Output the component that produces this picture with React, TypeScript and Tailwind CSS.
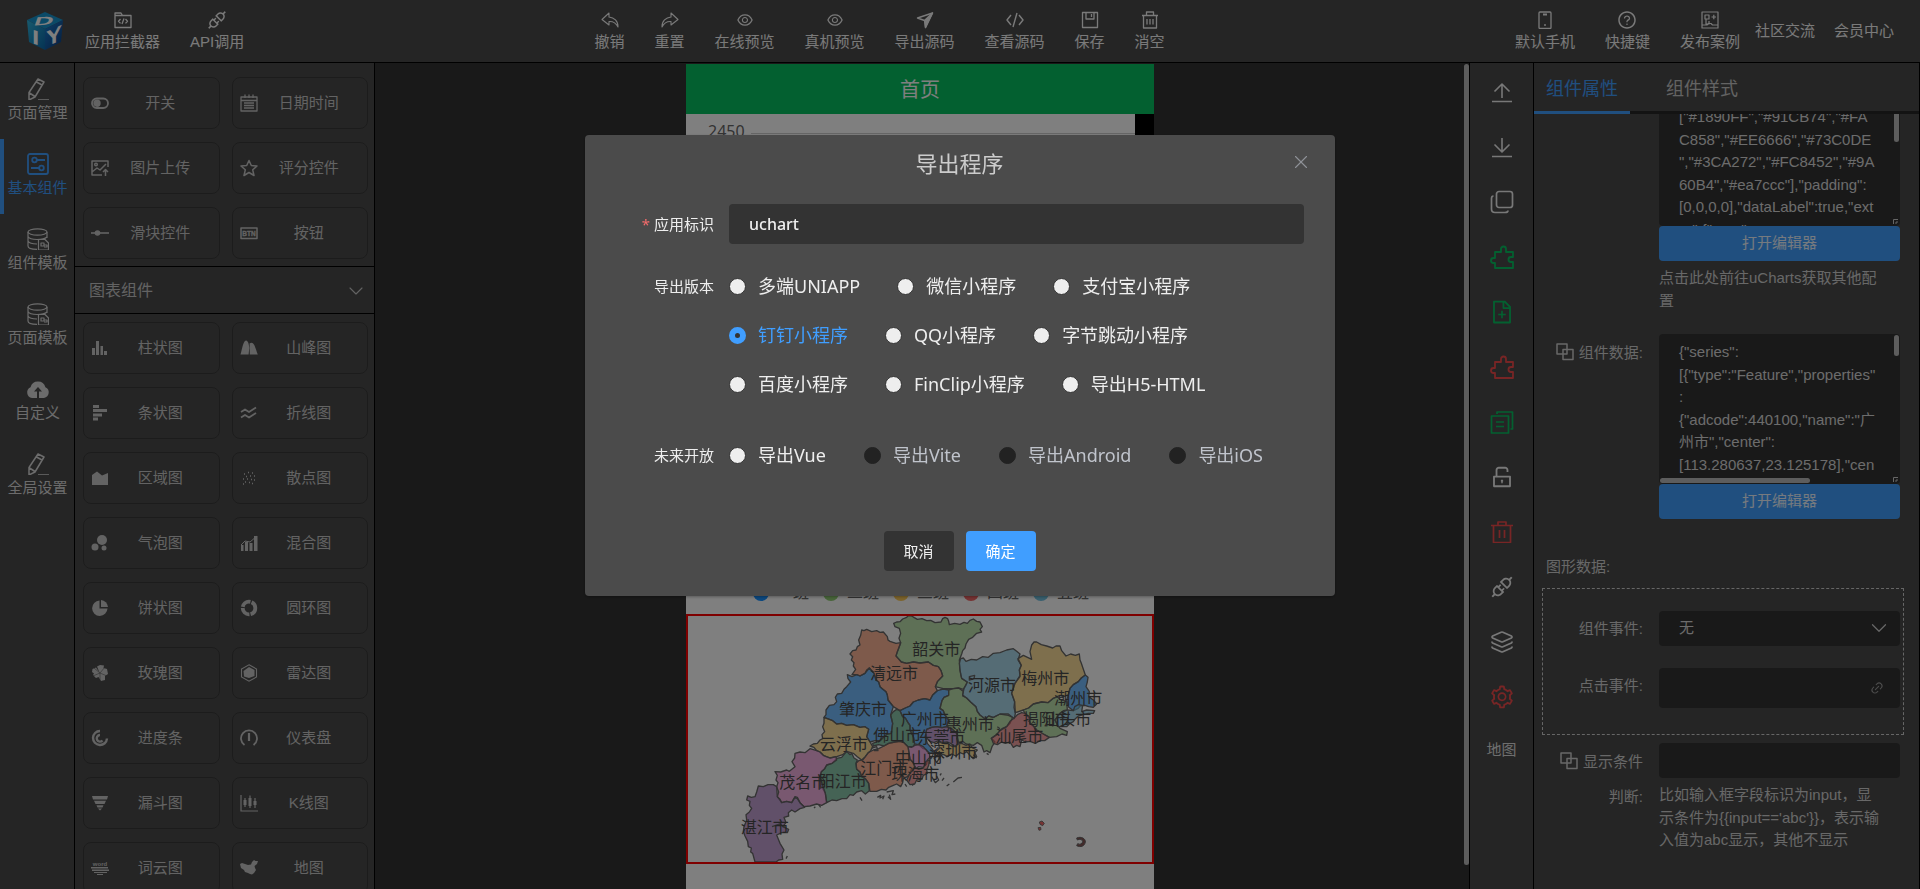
import React, { useState } from 'react';
import type { ReactNode } from 'react';
import {
  AiOutlineApi,
  AiOutlineEye,
  AiOutlineFileAdd,
  AiOutlineQuestionCircle,
  AiOutlineSetting,
  AiOutlineUnlock,
} from 'react-icons/ai';
import { ChevronDown, Layers, Link2, X } from 'lucide-react';

type IconProps = { children: ReactNode; className?: string; box?: number; width?: number };

function Line({ children, className = 'size-[18px]', box = 18, width = 1.3 }: IconProps) {
  return (
    <svg
      className={className}
      viewBox={`0 0 ${box} ${box}`}
      fill="none"
      stroke="currentColor"
      strokeWidth={width}
      strokeLinejoin="round"
      aria-hidden="true"
    >
      {children}
    </svg>
  );
}

function Solid({ children }: { children: ReactNode }) {
  return (
    <svg className="size-[18px] shrink-0" viewBox="0 0 18 18" fill="currentColor" aria-hidden="true">
      {children}
    </svg>
  );
}

/* ---------- header ---------- */

function Logo() {
  return (
    <svg className="h-[38px] w-9 overflow-visible" viewBox="0 0 36 38" aria-label="DIY">
      <defs>
        <linearGradient id="left" x1="0" y1="0" x2="1" y2="1">
          <stop offset="0" stopColor="#2fb4dc" />
          <stop offset="1" stopColor="#0a66a8" />
        </linearGradient>
        <linearGradient id="right" x1="0" y1="0" x2="1" y2="1">
          <stop offset="0" stopColor="#1b7fd0" />
          <stop offset="1" stopColor="#0b3a7c" />
        </linearGradient>
      </defs>
      <path d="M18 0 36 8 18 17 0 8Z" fill="#1795cf" />
      <path d="M0 8 18 17V38L2 30Z" fill="url(#left)" />
      <path d="M36 8 18 17V38L34 30Z" fill="url(#right)" />
      <g fill="#fff" fontFamily="Liberation Sans, sans-serif" fontWeight="700">
        <text transform="matrix(1.9 -.1 -.3 .85 6 13.5)" fontSize="14">D</text>
        <text transform="matrix(1.3 .5 0 1 5 31)" fontSize="20">I</text>
        <text transform="matrix(1.1 -.5 0 1 19 35)" fontSize="22">Y</text>
      </g>
    </svg>
  );
}

const undo = (
  <Line width={1.1}>
    <path d="M8 2 1 8.500 8 14V10.500C12 10.200 15 12 17 16 17.200 10 13 6.500 8 6Z" />
  </Line>
);
const redo = (
  <Line width={1.1}>
    <path d="M10 2 17 8.500 10 14V10.500C6 10.200 3 12 1 16 .8 10 5 6.500 10 6Z" />
  </Line>
);
const folderCode = (
  <Line>
    <path d="M1 16.500V2H7L8.500 4.500H17V16.500ZM1 4.500H8.500M6.500 8 4.500 10.200 6.500 12.400M11.500 8 13.500 10.200 11.500 12.400M10 7.500 8 13" />
  </Line>
);
const plane = (
  <Line width={1.4}>
    <path d="M1.500 7 16.500 2 9.500 16.500 8.500 9.500Z" />
    <path d="M16.500 2 9.500 16.500 9 9Z" fill="currentColor" />
  </Line>
);
const code = (
  <Line width={1.4}>
    <path d="M5 4 1 9 5 14M13 4 17 9 13 14M11 2 7 16" />
  </Line>
);
const save = (
  <Line width={1.3}>
    <path d="M1.500 1.500H16.500V16.500H1.500ZM5 1.500V8H13V1.500M10.500 3V6" />
  </Line>
);
const clear = (
  <Line>
    <path d="M1 4.500H17M5.500 4.500V1H12.500V4.500M2.500 4.500V17H15.500V4.500M6 8V13.500M9 8V13.500M12 8V13.500" />
  </Line>
);
const phone = (
  <Line>
    <rect x="3" y="1" width="12" height="16.500" rx="1" />
    <path d="M7 3.500H11M8.300 14H9.700" strokeWidth="1.800" />
  </Line>
);
const cases = (
  <Line width={1.2}>
    <path d="M1 1H17V17H1ZM4 4H8V8H4ZM10.500 6H15M12.800 3.800V8.200M5 8V13H8V10M1 14H6L7.500 12.500H10L11.500 14H17" />
  </Line>
);

function TopButton({ icon, label }: { icon: ReactNode; label: string }) {
  return (
    <button type="button" className="flex flex-col items-center whitespace-nowrap pt-0.5 text-[15px] leading-6">
      <span className="flex h-5 items-center">{icon}</span>
      {label}
    </button>
  );
}

const eye = <AiOutlineEye className="size-[18px]" />;

function Header() {
  return (
    <header className="flex h-[63px] shrink-0 items-center justify-between border-b border-black bg-[#4b4b4b] pl-[27px] pr-[26px] text-[#f4f4f4]">
      <div className="flex items-center">
        <Logo />
        <div className="ml-[22px] flex gap-[30px]">
          <TopButton icon={folderCode} label="应用拦截器" />
          <TopButton icon={<AiOutlineApi className="size-[22px]" />} label="API调用" />
        </div>
      </div>
      <div className="flex gap-[30px]">
        <TopButton icon={undo} label="撤销" />
        <TopButton icon={redo} label="重置" />
        <TopButton icon={eye} label="在线预览" />
        <TopButton icon={eye} label="真机预览" />
        <TopButton icon={plane} label="导出源码" />
        <TopButton icon={code} label="查看源码" />
        <TopButton icon={save} label="保存" />
        <TopButton icon={clear} label="消空" />
      </div>
      <nav className="flex items-center text-[15px]">
        <div className="flex gap-[30px]">
          <TopButton icon={phone} label="默认手机" />
          <TopButton icon={<AiOutlineQuestionCircle className="size-5" />} label="快捷键" />
          <TopButton icon={cases} label="发布案例" />
        </div>
        <a href="#community" className="ml-[15px]">社区交流</a>
        <a href="#member" className="ml-[19px]">会员中心</a>
      </nav>
    </header>
  );
}

/* ---------- left side ---------- */

const nav22 = 'size-[22px]';
const pencil = (
  <Line className={nav22} box={22} width={1.5}>
    <path d="M11 1 17 4 8 19 2 22V14.500ZM9.500 4 15 7M2.500 15 8 18.500M11 22H22" />
  </Line>
);
const parts = (
  <Line className={nav22} box={22} width={1.8}>
    <rect x="1" y="1" width="20" height="20" rx="2" />
    <circle cx="7.500" cy="7" r="2.300" />
    <circle cx="14.500" cy="15" r="2.300" />
    <path d="M10 7H18M4 15H12" />
  </Line>
);
const database = (
  <Line className={nav22} box={22} width={1.2}>
    <ellipse cx="10.500" cy="4" rx="9.500" ry="3.200" />
    <path d="M1 4V18C1 20 5 21.300 10 21.300M20 4V10M1 8.500C2 10.500 6 11.500 10 11.500 14 11.500 18 10.800 20 9M1 13C2 15 5 16 10 16M11.500 11.500H18L21.500 15V22H11.500ZM14 15H17V18H14ZM17 17H20V19H17" />
  </Line>
);
const cloud = (
  <svg className="size-6" viewBox="0 0 24 24" fill="currentColor" aria-hidden="true">
    <path d="M6 21A5.700 5.700 0 0 1 4.500 10.200 7.700 7.700 0 0 1 19.400 10.200 5.700 5.700 0 0 1 18 21H13V14.500H16L12 10 8 14.500H11V21Z" />
  </svg>
);

const sideItems: [string, ReactNode][] = [
  ['页面管理', pencil],
  ['基本组件', parts],
  ['组件模板', database],
  ['页面模板', database],
  ['自定义', cloud],
  ['全局设置', pencil],
];

function SideNav() {
  return (
    <nav className="flex w-[75px] shrink-0 flex-col border-r border-black bg-[#4b4b4b] pt-px">
      {sideItems.map(([label, icon]) => (
        <a
          key={label}
          href="#side"
          className={
            label === '基本组件'
              ? 'flex h-[75px] flex-col items-center border-l-4 border-[#409eff] pr-[3px] pt-[13px] text-[15px] leading-6 text-[#409eff]'
              : 'flex h-[75px] flex-col items-center pl-px pt-[13px] text-[15px] leading-6 text-[#d8d8d8]'
          }
        >
          <span className="flex h-6 items-center">{icon}</span>
          {label}
        </a>
      ))}
    </nav>
  );
}

const basics: [string, ReactNode][] = [
  ['开关', <Line width={1.8}><rect x="1" y="4.500" width="16" height="9.500" rx="4.700" /><circle cx="6" cy="9.200" r="2.800" fill="currentColor" /></Line>],
  ['日期时间', <Line><path d="M1 3H17V17H1ZM1 6.500H17M5 .5V4M9 .5V4M13 .5V4M4 9H14M4 11.500H14M4 14H14" /></Line>],
  ['图片上传', <Line width={1.5}><path d="M17 8V2H1V16H11M1 13 6 9 9 11 15 5M14.500 17V11M12 13 14.500 10.500 17 13" /><circle cx="5" cy="5.500" r="1.300" /></Line>],
  ['评分控件', <Line width={1.5}><path d="M9 1.500 11.300 6.500 17 7 12.700 10.800 14 16.500 9 13.500 4 16.500 5.300 10.800 1 7 6.700 6.500Z" /></Line>],
  ['滑块控件', <Line width={1.600}><path d="M0 9H18" /><circle cx="6.500" cy="9" r="2" fill="currentColor" /></Line>],
  [
    '按钮',
    <Line width={1.500}>
      <rect x="1" y="4" width="16" height="10.500" />
      <text x="9" y="11.800" textAnchor="middle" fontSize="6.500" fontWeight="700" fontFamily="Liberation Sans, sans-serif" fill="currentColor" stroke="currentColor" strokeWidth=".3">BTN</text>
    </Line>,
  ],
];

const charts: [string, ReactNode][] = [
  ['柱状图', <Solid><path d="M1 9H4V16H1ZM5 2H8V16H5ZM9.500 7H12V16H9.500ZM13 12H16V16H13Z" /></Solid>],
  ['山峰图', <Solid><path d="M.5 15.500C2 11 3 2 6 1.500 8.500 2 9 6 9.300 9L8.600 15.500ZM9.800 15.500 9.600 4.500C14.500 1 16 12 17.800 15.500Z" /></Solid>],
  ['条状图', <Solid><path d="M2 1H8V4H2ZM2 5H16V8H2ZM2 9.500H11V12.500H2ZM2 13.500H7V16.500H2Z" /></Solid>],
  ['折线图', <Line width={1.800}><path d="M1 8 5 5.500 9 8 16 3.500M1 13.500 5 11 9 13.500 16 9" /></Line>],
  ['区域图', <Solid><path d="M1 16V6L6 2.500 11 6.500 17 4V16Z" /></Solid>],
  ['散点图', <Line width={1.500}><path d="M4 5H5M8 3.500H9M12 4H13M14 7H15M6 7.500H7M10 7H11M3 10H4M7 10H8M11 10.500H12M14 11H15M5 13H6M9 13.500H10M12 14.500H13M3 15H4" /></Line>],
  ['气泡图', <Solid><circle cx="11" cy="6" r="5" /><circle cx="4" cy="13" r="3.500" /><circle cx="13" cy="14" r="2.500" /></Solid>],
  ['混合图', <Solid><path d="M1 11H3.500V17H1ZM5 8H8V17H5ZM9.500 9H12.500V17H9.500ZM14 2H17.500V17H14Z" /><path d="M1 11 5 7 10 8 17 2" fill="none" stroke="currentColor" /></Solid>],
  ['饼状图', <Solid><path d="M8.500 1.500A7.700 7.700 0 1 0 16.500 9.500H8.500Z" /><path d="M10 1A7.500 7.500 0 0 1 17 8H10Z" /></Solid>],
  ['圆环图', <Line width={3.800}><circle cx="9" cy="9" r="6.300" strokeDasharray="8 1.200 10 1.200 10 1.200 7 1" /></Line>],
  ['玫瑰图', <Solid><path d="M8.500 8.500 6 2.500 9 1 13 1.500 12.500 4 16 5 17 10 14 12 14 16 10 17 7.500 13 5 14 2 11 3 9.500 1 8 1.500 5 5 3.500Z" /><path d="M9 9 3 4M9 9 2 12M9 9 14 3M9 9 16 12M9 9 9 17" stroke="#4b4b4b" strokeWidth=".5" /></Solid>],
  ['雷达图', <Solid><path d="M9 .8 16.500 5V13L9 17.200 1.500 13V5Z" fill="none" stroke="currentColor" strokeWidth="1.100" /><path d="M9 3 14.500 6V12L9 14 4 12.500 3.500 7Z" /></Solid>],
  ['进度条', <Line width={2.400}><path d="M9 2A7 7 0 1 0 16 9.500M9 6A3.300 3.300 0 1 0 11.500 11.500" /></Line>],
  ['仪表盘', <Line width={1.800}><path d="M4.500 16A8 8 0 1 1 13.500 16" /><path d="M9 4V12" strokeWidth="2.200" /></Line>],
  ['漏斗图', <Solid><path d="M1 2H17L16 5.500H2ZM3 6.800H15L13.500 10H4.500ZM5.500 11.300H12.500L11.500 13.500H6.500ZM7 14.500H11L9 16.500Z" /></Solid>],
  ['K线图', <Line width={1.200}><path d="M1 1V17H18M5 4V13M10 1.500V14M15 4V14" /><path d="M5 6V11M10 4V12M15 7V11" strokeWidth="3" /></Line>],
  [
    '词云图',
    <Solid>
      <text x="9" y="7" textAnchor="middle" fontSize="6" fontWeight="700" fontFamily="Liberation Sans, sans-serif">word</text>
      <path d="M0 8H17V9.500H0ZM1 10.500H18V12H1ZM3 13H16V14H3ZM6 15H12V16H6Z" />
    </Solid>,
  ],
  ['地图', <Solid><path d="M0 5 2 4 5 5 8 6 11 5.500 12 3 14 1 15.500 2 18 2 17 5 14.500 7 15 9 16 11 14 14 12 15.500 10 15 8 14 5 13 4 11 1 9Z" /></Solid>],
];

function CardGrid({ items }: { items: [string, ReactNode][] }) {
  return (
    <div className="grid grid-cols-2 gap-x-3 gap-y-[13px] pl-2 pr-1.5">
      {items.map(([label, icon]) => (
        <button
          type="button"
          key={label}
          className="flex h-[52px] items-center rounded-lg border border-[#393939] px-[7px] text-[15px] text-[#c6c6c6]"
        >
          {icon}
          <span className="flex-1 text-center">{label}</span>
        </button>
      ))}
    </div>
  );
}

function ComponentPanel() {
  return (
    <aside className="flex w-[300px] shrink-0 flex-col overflow-hidden border-r border-black bg-[#4b4b4b] pt-3.5">
      <div className="shrink-0 pb-[7px]">
        <CardGrid items={basics} />
      </div>
      <button
        type="button"
        className="flex h-12 shrink-0 items-center justify-between border-y border-black pl-3.5 pr-1.5 pt-px text-base text-[#c6c6c6]"
      >
        图表组件
        <ChevronDown className="size-6" strokeWidth={1.1} />
      </button>
      <div className="shrink-0 pt-2">
        <CardGrid items={charts} />
      </div>
    </aside>
  );
}

/* ---------- canvas ---------- */

const blue = '#1890FF';
const green = '#91CB74';
const yellow = '#FAC858';
const red = '#EE6666';
const cyan = '#73C0DE';
const teal = '#3CA272';
const orange = '#FC8452';
const purple = '#9A60B4';
const pink = '#EA7CCC';

const regions: [string, number, number, string, string][] = [
  ['韶关市', 697, 207, green, '641,130 650,126 660,125 668,117 680,112 686,106 695,108 703,113 712,118 726,116 740,122 752,121 765,128 783,126 788,116 795,112 803,116 806,124 808,134 824,130 840,133 852,127 862,130 870,121 880,117 890,124 900,126 907,140 900,148 905,156 890,160 878,172 866,178 858,192 855,204 848,212 845,222 838,240 840,270 845,295 862,306 858,316 850,328 836,324 820,326 790,326 766,320 772,305 788,288 783,272 775,260 760,256 745,246 720,249 700,246 680,250 664,246 655,236 648,228 652,215 656,205 662,188 657,175 662,160 658,145 645,140'],
  ['清远市', 570, 279, orange, '545,150 552,152 560,148 575,155 590,152 600,157 610,156 622,170 624,180 630,184 648,190 662,188 656,205 652,215 648,228 655,236 664,246 680,250 700,246 720,249 745,246 760,256 775,260 783,272 788,288 772,305 766,320 772,332 758,345 750,360 734,356 715,360 700,366 690,378 676,384 660,392 640,380 624,360 622,345 618,335 606,326 600,320 596,306 588,300 582,280 568,264 560,270 555,280 540,288 530,284 516,284 527,268 520,258 522,248 514,240 518,230 510,222 518,212 528,210 532,200 540,195 536,180 542,166'],
  ['肇庆市', 477, 388, blue, '502,284 516,290 530,284 540,288 555,280 568,264 582,280 588,300 596,306 600,320 618,335 622,345 624,360 640,380 632,405 638,430 634,460 622,462 612,470 600,482 585,482 570,486 560,470 566,448 555,440 540,442 520,434 500,436 485,430 470,432 458,422 448,418 432,412 438,404 438,390 448,376 462,374 470,365 466,352 472,342 485,340 492,328 500,320 512,306 504,296'],
  ['云浮市', 420, 492, yellow, '432,412 448,418 458,422 470,432 485,430 500,436 520,434 540,442 555,440 566,448 560,470 570,486 578,500 572,512 565,518 556,530 545,540 532,530 520,520 500,514 488,524 470,530 450,534 438,530 430,526 420,516 410,512 402,502 390,498 400,492 412,490 420,480 428,476 426,464 434,455 428,440 432,430'],
  ['广州市', 662, 417, blue, '660,392 676,384 690,378 700,366 715,360 734,356 750,360 758,345 772,332 790,327 806,330 806,346 792,352 786,362 780,385 790,392 795,405 806,420 800,440 786,443 770,440 755,442 740,448 736,470 742,490 755,505 764,518 748,520 738,508 730,506 716,494 704,492 700,470 690,450 690,436 684,428 676,414 668,410'],
  ['佛山市', 580, 464, teal, '640,395 650,388 660,392 668,410 676,414 684,428 690,436 690,450 700,470 704,492 700,500 684,500 672,488 660,484 645,486 626,490 612,498 596,494 580,498 578,490 600,482 612,470 622,462 634,460 638,430 632,405'],
  ['惠州市', 798, 432, green, '806,330 820,326 836,324 850,334 848,348 860,354 872,366 888,380 892,394 900,405 915,416 926,408 940,412 960,402 985,406 998,412 990,430 980,440 966,446 960,452 950,464 934,475 945,486 936,500 930,518 920,512 912,516 905,496 892,488 880,496 858,492 848,484 836,488 830,460 815,446 800,440 806,420 795,405 790,392 780,385 786,362 792,352 806,346'],
  ['河源市', 864, 316, cyan, '842,236 850,234 858,244 874,238 890,240 908,230 925,232 940,220 960,218 980,210 1000,206 1010,214 1020,222 1014,240 1024,256 1018,270 1022,284 1005,310 1000,325 995,340 1004,365 1002,382 1006,400 1003,416 985,402 960,402 940,412 926,408 915,416 900,405 892,394 888,380 872,366 860,354 848,345 852,325 862,306 845,295 842,282 840,270 838,250'],
  ['梅州市', 1024, 295, yellow, '1055,195 1062,186 1070,186 1084,194 1100,198 1118,204 1128,198 1140,198 1145,212 1158,228 1172,222 1186,226 1198,222 1200,240 1204,250 1208,262 1216,285 1204,294 1195,305 1180,314 1170,325 1165,345 1150,350 1140,346 1120,355 1104,368 1085,366 1060,372 1046,384 1030,390 1006,398 1004,365 995,340 1000,325 1005,310 1020,290 1018,270 1024,256 1014,236 1030,226 1055,238 1050,215'],
  ['揭阳市', 1028, 416, green, '1030,390 1046,384 1060,372 1085,366 1104,368 1120,355 1132,350 1140,358 1160,365 1162,390 1150,392 1140,400 1125,420 1132,434 1140,445 1162,455 1160,466 1146,462 1130,470 1108,472 1090,462 1070,450 1060,438 1050,430 1048,412 1036,404'],
  ['潮州市', 1123, 354, blue, '1216,285 1224,292 1222,306 1218,320 1228,335 1226,350 1240,360 1250,372 1240,382 1226,380 1215,376 1200,378 1195,385 1180,392 1165,380 1160,360 1165,345 1170,325 1180,314 1195,305 1204,294'],
  ['汕头市', 1090, 418, cyan, '1180,392 1184,380 1195,374 1208,376 1205,395 1220,390 1244,392 1240,400 1225,400 1210,404 1195,408 1186,416 1180,425 1170,430 1160,440 1135,440 1125,420 1140,400 1162,390'],
  ['汕尾市', 946, 468, red, '1025,398 1036,400 1048,412 1050,430 1060,438 1070,450 1090,462 1108,472 1094,482 1080,482 1066,490 1050,484 1036,486 1025,480 1020,500 1010,496 1000,502 990,486 976,490 965,486 952,494 940,490 934,475 950,464 960,452 980,440 990,424 1000,416 1012,404'],
  ['东莞市', 712, 470, purple, '740,448 755,442 770,440 786,443 800,440 815,446 832,462 830,476 834,490 826,500 812,490 800,486 786,488 775,482 762,488 750,484 736,470'],
  ['深圳市', 748, 515, yellow, '775,484 788,490 800,488 814,498 826,500 834,492 845,490 858,496 870,492 878,504 892,510 884,518 890,530 880,536 868,524 860,515 850,522 840,518 828,528 815,522 802,530 790,523 776,528 765,525 770,512 778,505'],
  ['中山市', 645, 535, pink, '684,500 694,502 704,496 718,494 730,500 740,512 748,520 750,532 742,540 740,552 730,562 715,560 708,566 700,548 690,538'],
  ['珠海市', 634, 582, red, '690,580 694,568 704,562 716,568 730,564 738,544 748,540 746,556 740,570 742,580 730,586 726,598 710,600 704,612 690,614 680,600'],
  ['江门市', 541, 565, orange, '645,486 660,484 672,488 684,500 688,525 690,538 700,548 704,562 690,580 682,590 670,596 668,608 662,620 650,612 640,616 626,622 618,630 604,628 590,634 570,634 566,610 556,596 545,590 540,576 530,568 528,550 536,542 548,540 556,530 565,518 580,510 596,506 612,498 626,490'],
  ['阳江市', 416, 602, teal, '500,514 510,524 515,520 522,534 532,540 528,550 530,568 540,576 545,590 556,596 566,610 568,632 556,642 545,632 530,636 520,646 510,644 500,656 486,656 470,662 456,660 440,668 436,640 428,625 426,610 420,590 424,575 434,566 440,555 456,550 470,535 485,532'],
  ['茂名市', 298, 605, pink, '345,520 360,516 375,518 390,506 410,512 420,516 430,526 450,534 468,530 470,540 456,550 440,555 434,566 424,575 420,590 426,610 436,640 440,668 425,676 410,672 390,678 372,680 360,668 352,652 345,650 335,668 320,664 305,668 292,650 296,636 290,620 294,608 288,600 292,586 285,575 302,576 320,570 328,574 345,560 336,545 344,534'],
  ['湛江市', 182, 740, purple, '235,618 250,620 264,614 280,614 290,620 292,650 300,658 305,668 320,664 335,668 345,652 352,656 360,668 374,682 360,686 345,696 335,690 325,698 326,708 312,712 318,728 308,740 326,748 322,758 305,758 290,765 296,780 300,790 312,810 306,822 308,838 296,840 288,846 225,846 218,820 212,816 214,804 205,800 203,784 195,768 190,754 192,740 200,720 198,704 208,696 215,685 208,676 210,664 200,660 203,648 214,652 225,650 230,636'],
];

const islands =
  'M592 652 602 646 600 654 612 648 608 658M620 636 640 632 636 644 646 642 M624 650 632 658 628 644M540 652 546 662M402 684 406 680M416 674 422 682M755 590 766 608 776 600 770 588M780 586 784 580M786 602 792 594M800 618 808 612M820 606 834 594 846 592M318 836 322 828M675 612 680 620M696 616 702 612M576 504 590 500 594 512 582 512M868 290 884 286 882 296 868 300ZM276 740 300 732 318 744M762 534 770 548 782 528M952 440 960 446M880 524 890 534M920 520 926 524';

function MapChart() {
  return (
    <svg className="h-full w-full" viewBox="24 108 1392 738" aria-label="地图">
      <g stroke="#666" strokeWidth="4" strokeLinejoin="round">
        {regions.map(([name, , , color, points]) => (
          <polygon key={name} points={points} fill={color} fillOpacity="0.6" />
        ))}
        <path d={islands} fill="none" />
        <path d="M1078 726 1086 723 1093 730 1088 737 1080 733ZM1074 743 1082 742 1083 749 1077 751Z" fill={red} strokeWidth="2.500" />
        <path d="M1190 774C1204 768 1217 776 1216 786 1214 799 1202 803 1190 797L1193 791C1201 795 1207 791 1208 785 1208 778 1199 776 1192 780Z" fill="#855" strokeWidth="3" />
      </g>
      <g fill="#4a4a4a" fontSize="48" fontFamily="Noto Sans CJK SC, sans-serif">
        {regions.map(([name, x, y]) => (
          <text key={name} x={x} y={y + 18}>{name}</text>
        ))}
      </g>
    </svg>
  );
}

const legend: [string, string][] = [
  ['一班', 'bg-[#1890FF]'],
  ['二班', 'bg-[#91CB74]'],
  ['三班', 'bg-[#FAC858]'],
  ['四班', 'bg-[#EE6666]'],
  ['五班', 'bg-[#73C0DE]'],
];

function Canvas() {
  return (
    <main className="flex min-w-0 flex-1 bg-[#333] pt-px">
      <div className="flex min-w-0 flex-1 justify-center pl-px">
        <div className="flex w-[468px] flex-col bg-white">
          <h1 className="flex h-[50px] shrink-0 items-center justify-center bg-[#07c160] pt-px text-xl text-white">首页</h1>
          <div className="h-[450px] shrink-0 bg-black pr-[19px]">
            <div className="flex h-full items-start bg-white pl-[22px] pt-[5px] font-[family-name:'Noto_Sans',sans-serif] text-base leading-6 text-[#666]">
              2450
              <span className="ml-1.5 mt-3.5 h-px flex-1 bg-[#ccc]" />
            </div>
          </div>
          <ul className="flex h-[50px] shrink-0 items-center justify-center gap-[14px] pl-0.5 pt-2 text-base text-[#666]">
            {legend.map(([name, dot]) => (
              <li key={name} className="flex items-center gap-2">
                <span className={`size-4 rounded-full ${dot}`} />
                {name}
              </li>
            ))}
          </ul>
          <div className="h-[250px] shrink-0 border-2 border-[#f00]">
            <MapChart />
          </div>
        </div>
      </div>
      <div className="h-[801px] w-[5px] rounded-full bg-[#bbb]" />
    </main>
  );
}

/* ---------- tool column ---------- */

const tool22 = 'size-[22px]';
const puzzle = (
  <Line className="size-6" box={24} width={1.8}>
    <path d="M5 7H11V4A2.500 2.500 0 1 1 16 4V7H23V12H21A2.500 2.500 0 1 0 21 17H23V23H5V18H3.500A2.500 2.500 0 1 1 3.500 13H5Z" />
  </Line>
);

const tools: [string, string, ReactNode][] = [
  ['上移', 'text-[#f0f0f0]', <Line className={tool22} box={22} width={1.6}><path d="M1 20.500H21M11 17V3M3.500 10.500 11 3 18.500 10.500" /></Line>],
  ['下移', 'text-[#f0f0f0]', <Line className={tool22} box={22} width={1.6}><path d="M1 20.500H21M11 2V16M3.500 8.500 11 16 18.500 8.500" /></Line>],
  ['复制', 'text-[#f0f0f0]', <Line className="size-6" box={24} width={1.7}><rect x="6.500" y="1.500" width="16" height="16" rx="2.500" /><path d="M3.500 6C2 6 1.500 7 1.500 8.500V19C1.500 21.500 2.500 22.500 5 22.500H15C17 22.500 18 22 18 20.500" /></Line>],
  ['组合', 'text-[#07c160]', puzzle],
  ['添加', 'text-[#07c160]', <AiOutlineFileAdd className="size-[26px]" />],
  ['拆分', 'text-[#f04a4a]', puzzle],
  ['粘贴', 'text-[#07c160]', <Line className="size-6" box={24} width={1.7}><path d="M1.500 6H18.500V23H1.500ZM7 4V2H22.500V19H20.500M6 12H14M6 16.500H14" /></Line>],
  ['解锁', 'text-[#f0f0f0]', <AiOutlineUnlock className="size-[26px]" />],
  ['删除', 'text-[#f04a4a]', <Line className={tool22} box={22} width={1.7}><path d="M0 4.500H22M7 4.500V1H15V4.500M2.500 4.500V21.500H19.500V4.500M8.500 9V17M13.500 9V17" /></Line>],
  ['接口', 'text-[#f0f0f0]', <AiOutlineApi className="size-[26px]" />],
  ['图层', 'text-[#f0f0f0]', <Layers className="size-6" strokeWidth={1.7} />],
  ['设置', 'text-[#f04a4a]', <AiOutlineSetting className="size-[26px]" />],
];

function ToolColumn() {
  return (
    <div className="flex w-[65px] shrink-0 flex-col items-center border-x border-black bg-[#4b4b4b] pt-px">
      {tools.map(([label, color, icon]) => (
        <button key={label} type="button" aria-label={label} className={`flex h-[55px] w-full shrink-0 items-center justify-center ${color}`}>
          {icon}
        </button>
      ))}
      <span className="pt-[15px] text-[15px] text-[#ddd]">地图</span>
    </div>
  );
}

/* ---------- property panel ---------- */

const configText =
  '["#1890FF","#91CB74","#FA\nC858","#EE6666","#73C0DE\n","#3CA272","#FC8452","#9A\n60B4","#ea7ccc"],"padding":\n[0,0,0,0],"dataLabel":true,"ext\nra":{"map":';
const dataText =
  '{"series":\n[{"type":"Feature","properties"\n:\n{"adcode":440100,"name":"广\n州市","center":\n[113.280637,23.125178],"cen';

const fieldBase = 'block w-full rounded bg-[#333] text-[#d8d8d8] outline-none';

function Overlap() {
  return (
    <Line className="mr-[5px] inline-block size-[18px] align-[-3px]" width={1.5}>
      <path d="M1 1H11V11H1ZM7 6.500H17V16.500H7Z" />
    </Line>
  );
}

function Resizer() {
  return (
    <svg className="absolute bottom-0.5 right-0.5 size-[5px]" viewBox="0 0 5 5" fill="none" stroke="#ccc" aria-hidden="true">
      <path d="M.5 5V.5H5M3 5V3H5" />
    </svg>
  );
}

const labelClass = 'w-[101px] shrink-0 pt-px text-right leading-[35px]';
const rowClass = 'flex gap-4 pl-2 pr-[19px]';
const openClass = 'flex h-[35px] w-full items-center justify-center rounded bg-[#409eff] text-[15px] text-white/90';

function Properties() {
  return (
    <aside className="flex w-[386px] shrink-0 flex-col border-r border-black bg-[#4b4b4b] pt-px text-[15px] text-[#d0d0d0]">
      <div role="tablist" className="flex h-[50px] shrink-0 border-b-[3px] border-[#262626] text-lg">
        <button type="button" role="tab" aria-selected="true" className="-mb-[3px] border-b-[3px] border-[#409eff] px-3 pt-0.5 text-[#409eff]">
          组件属性
        </button>
        <button type="button" role="tab" aria-selected="false" className="ml-6 -mb-[3px] border-b-[3px] border-transparent px-3 pt-0.5 text-[#c6c6c6]">
          组件样式
        </button>
      </div>
      <div className="min-h-0 flex-1 overflow-hidden">
        <div className={`${rowClass} -mt-[38px]`}>
          <span className={labelClass} />
          <div className="min-w-0 flex-1">
            <div className="relative">
              <textarea
                aria-label="图表配置"
                defaultValue={configText}
                className={`${fieldBase} h-[150px] resize-none overflow-hidden whitespace-pre pl-5 pt-[30px] leading-normal`}
              />
              <span className="absolute right-px top-6 h-[42px] w-[5px] rounded-full bg-[#bbb]" />
              <Resizer />
            </div>
            <button type="button" className={openClass}>打开编辑器</button>
            <p className="mt-1.5 pr-4 leading-normal">点击此处前往uCharts获取其他配置</p>
          </div>
        </div>

        <div className={`${rowClass} mt-[22px]`}>
          <label htmlFor="data" className={labelClass}>
            <Overlap />组件数据:
          </label>
          <div className="min-w-0 flex-1">
            <div className="relative">
              <textarea
                id="data"
                defaultValue={dataText}
                className={`${fieldBase} h-[150px] resize-none overflow-hidden whitespace-pre pl-5 pt-[7px] leading-normal`}
              />
              <span className="absolute right-px top-px h-[21px] w-[5px] rounded-full bg-[#bbb]" />
              <span className="absolute bottom-px left-px h-[5px] w-[150px] rounded-full bg-[#bbb]" />
              <Resizer />
            </div>
            <button type="button" className={openClass}>打开编辑器</button>
          </div>
        </div>

        <p className="mt-[30px] pl-3 leading-[35px]">图形数据:</p>

        <fieldset className="ml-2 mr-[15px] mt-1 h-[147px] border border-dashed border-[#ccc] pt-[22px]">
          <div className="flex gap-4 pr-[3px]">
            <label htmlFor="event" className="w-[100px] shrink-0 text-right leading-[35px]">组件事件:</label>
            <div className="relative flex-1">
              <select id="event" className={`${fieldBase} h-[35px] appearance-none pl-5`}>
                <option>无</option>
              </select>
              <ChevronDown className="pointer-events-none absolute right-2 top-1 size-[26px]" strokeWidth={1.1} />
            </div>
          </div>
          <div className="mt-[22px] flex gap-4 pr-[3px]">
            <label htmlFor="click" className="w-[100px] shrink-0 text-right leading-[35px]">点击事件:</label>
            <div className="relative flex-1">
              <input id="click" className={`${fieldBase} h-10 pl-5 pr-10`} />
              <Link2 className="pointer-events-none absolute right-4 top-[13px] size-3.5 -rotate-45 text-[#999]" strokeWidth={1.8} />
            </div>
          </div>
        </fieldset>

        <div className={`${rowClass} mt-2`}>
          <label htmlFor="condition" className={labelClass}>
            <Overlap />显示条件<br />判断:
          </label>
          <div className="min-w-0 flex-1">
            <input id="condition" className={`${fieldBase} h-[35px] px-5`} />
            <p className="mt-1.5 pr-4 leading-normal">
              比如输入框字段标识为input，显示条件为{"{{input=='abc'}}"}，表示输入值为abc显示，其他不显示
            </p>
          </div>
        </div>
      </div>
    </aside>
  );
}

/* ---------- export dialog ---------- */

const versions = ['多端UNIAPP', '微信小程序', '支付宝小程序', '钉钉小程序', 'QQ小程序', '字节跳动小程序', '百度小程序', 'FinClip小程序', '导出H5-HTML', '导出Vue'];
const future = ['导出Vite', '导出Android', '导出iOS'];

type RadioProps = { name: string; value: string; onPick: (v: string) => void; disabled?: boolean };

function Radio({ name, value, onPick, disabled = false }: RadioProps) {
  return (
    <label
      className={
        disabled
          ? 'flex items-center gap-3 text-lg leading-[49px] text-[#c0c4cc]'
          : 'flex items-center gap-3 text-lg leading-[49px] text-[#eee] has-checked:text-[#409eff]'
      }
    >
      <input
        type="radio"
        name="version"
        checked={value === name}
        disabled={disabled}
        onChange={() => onPick(name)}
        className="size-[17px] appearance-none rounded-full border border-[#333] bg-[#eee] checked:border-[6px] checked:border-[#409eff] checked:bg-[#333] disabled:border-[#222] disabled:bg-[#222]"
      />
      {name}
    </label>
  );
}

const dialogLabel = 'w-[99px] shrink-0 whitespace-nowrap text-right text-[15px] text-[#eee]';

function ExportDialog() {
  const [value, setValue] = useState('钉钉小程序');
  return (
    <div className="fixed inset-0 flex items-start justify-center bg-black/50 pt-[135px]">
      <div
        role="dialog"
        aria-labelledby="export-title"
        className="w-[750px] rounded-sm bg-[#4b4b4b] pb-[25px] pl-[30px] pr-[31px] font-[family-name:'Noto_Sans','Noto_Sans_CJK_SC',sans-serif] shadow-[0_1px_3px_rgba(0,0,0,0.3)]"
      >
        <div className="relative flex justify-center pt-3">
          <h2 id="export-title" className="text-[22px] leading-8 text-[#ccc]">导出程序</h2>
          <button type="button" aria-label="关闭" className="absolute -right-2 top-4 text-[#909399]">
            <X className="size-[22px]" strokeWidth={1.2} />
          </button>
        </div>
        <form onSubmit={(e) => e.preventDefault()}>
          <div className="mt-[25px] flex items-center gap-[15px]">
            <label htmlFor="app-id" className={dialogLabel}>
              <span className="mr-1 text-[#f56c6c]">*</span>应用标识
            </label>
            <input
              id="app-id"
              defaultValue="uchart"
              className="h-10 min-w-0 flex-1 rounded bg-[#333] px-5 text-base font-medium text-[#eee] outline-none"
            />
          </div>
          <div className="mt-[18px] flex gap-[15px]">
            <span className={`${dialogLabel} leading-[49px]`}>导出版本</span>
            <div className="flex flex-wrap gap-x-[37px]">
              {versions.slice(0, 9).map((v) => (
                <Radio key={v} name={v} value={value} onPick={setValue} />
              ))}
            </div>
          </div>
          <div className="mt-[22px] flex gap-[15px]">
            <span className={`${dialogLabel} leading-[49px]`}>未来开放</span>
            <div className="flex flex-wrap gap-x-[38px]">
              <Radio name={versions[9]} value={value} onPick={setValue} />
              {future.map((v) => (
                <Radio key={v} name={v} value={value} onPick={setValue} disabled />
              ))}
            </div>
          </div>
          <div className="mt-[51px] flex justify-center gap-3 text-[15px]">
            <button type="button" className="h-10 w-[70px] rounded bg-[#333] text-[#eee]">取消</button>
            <button type="submit" className="h-10 w-[70px] rounded bg-[#409eff] text-white">确定</button>
          </div>
        </form>
      </div>
    </div>
  );
}

export default function App() {
  return (
    <div className="flex h-screen flex-col overflow-hidden bg-[#4b4b4b] font-[family-name:'Liberation_Sans','Noto_Sans_CJK_SC',sans-serif]">
      <Header />
      <div className="flex min-h-0 flex-1">
        <SideNav />
        <ComponentPanel />
        <Canvas />
        <ToolColumn />
        <Properties />
      </div>
      <ExportDialog />
    </div>
  );
}
